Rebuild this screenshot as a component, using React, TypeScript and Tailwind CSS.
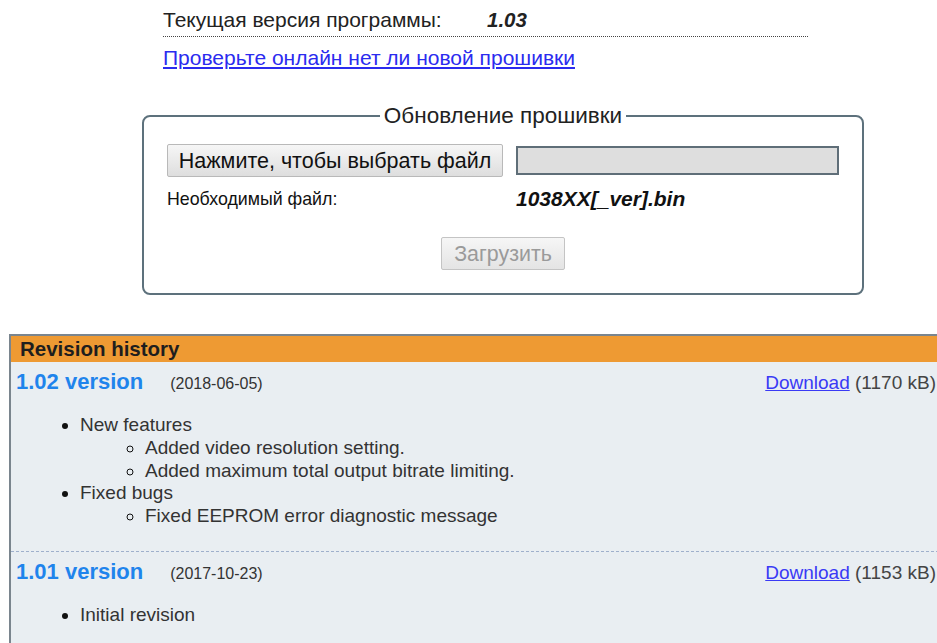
import React from "react";

type Revision = {
  version: string;
  date: string;
  size: string;
  items: { title: string; children?: string[] }[];
};

const revisions: Revision[] = [
  {
    version: "1.02 version",
    date: "(2018-06-05)",
    size: "(1170 kB)",
    items: [
      {
        title: "New features",
        children: ["Added video resolution setting.", "Added maximum total output bitrate limiting."],
      },
      { title: "Fixed bugs", children: ["Fixed EEPROM error diagnostic message"] },
    ],
  },
  {
    version: "1.01 version",
    date: "(2017-10-23)",
    size: "(1153 kB)",
    items: [{ title: "Initial revision" }],
  },
];

function RevisionEntry({ rev, first }: { rev: Revision; first: boolean }) {
  return (
    <div className={first ? "pb-[23px]" : "border-t border-dashed border-[#9fb0cc] pb-[23px]"}>
      <div className="flex items-center justify-between pl-[5px] pr-[13px] pt-[8px] leading-[24px]">
        <div className="flex items-baseline">
          <span className="text-[22px] font-bold text-[#1f84ec]">{rev.version}</span>
          <span className="ml-[27px] text-[16px] text-[#333]">{rev.date}</span>
        </div>
        <div className="whitespace-nowrap text-[19px] text-[#444]">
          <a href="#" className="text-[#3a3af5] underline">
            Download
          </a>{" "}
          {rev.size}
        </div>
      </div>
      <ul className="mt-[18px] ml-[69px] list-disc text-[19px] leading-[22.75px] text-[#333] marker:text-[#111]">
        {rev.items.map((item) => (
          <li key={item.title}>
            {item.title}
            {item.children && (
              <ul className="ml-[65px] list-[circle]">
                {item.children.map((c) => (
                  <li key={c}>{c}</li>
                ))}
              </ul>
            )}
          </li>
        ))}
      </ul>
    </div>
  );
}

export default function App() {
  return (
    <div className="min-h-[643px] w-[937px] overflow-hidden bg-white font-['Liberation_Sans',Arial,sans-serif] text-[#222]">
      {/* current version */}
      <div className="ml-[163px] w-[645px] pt-[8px]">
        <div className="flex items-center border-b border-dotted border-[#444] pb-[4px] text-[21px] leading-[24px]">
          <span className="w-[324px]">Текущая версия программы:</span>
          <span className="text-[20.5px] font-bold italic">1.03</span>
        </div>
        <a href="#" className="mt-[9px] inline-block text-[21px] leading-[24px] text-[#2b2bef] underline">
          Проверьте онлайн нет ли новой прошивки
        </a>
      </div>

      {/* firmware upload */}
      <fieldset className="ml-[142px] mt-[31px] h-[192px] w-[722px] rounded-[8px] border-2 border-[#5d717c] px-[23px]">
        <legend className="mx-auto px-[4px] text-[22.5px] leading-[26px] text-[#222]">Обновление прошивки</legend>
        <div className="mt-[15px] flex items-center">
          <button className="h-[33px] w-[336px] rounded-[2px] border border-[#b9b9b9] bg-gradient-to-b from-[#f6f6f6] to-[#dedede] text-[21.5px] leading-[24px] text-[#111]">
            Нажмите, чтобы выбрать файл
          </button>
          <div className="ml-[13px] h-[29px] w-[323px] border-2 border-[#5f6e78] bg-[#dedede]" />
        </div>
        <div className="mt-[10px] flex items-center leading-[24px]">
          <span className="w-[349px] text-[17.8px] text-[#111]">Необходимый файл:</span>
          <span className="text-[21px] font-bold italic text-[#111]">1038XX[_ver].bin</span>
        </div>
        <div className="mt-[26px] flex justify-center">
          <button
            disabled
            className="h-[33px] w-[124px] rounded-[2px] border border-[#c4c4c4] bg-gradient-to-b from-[#f6f6f6] to-[#e4e4e4] text-[21.4px] leading-[24px] text-[#9a9a9a]"
          >
            Загрузить
          </button>
        </div>
      </fieldset>

      {/* revision history */}
      <div className="ml-[9px] mt-[39px] w-[940px] border-l-2 border-t-2 border-[#7a858e] bg-[#e9eef2]">
        <div className="h-[26px] bg-[#ee9a33] pl-[9px] text-[20.5px] font-bold leading-[26px] text-[#1e1e1e]">
          Revision history
        </div>
        {revisions.map((rev, i) => (
          <RevisionEntry key={rev.version} rev={rev} first={i === 0} />
        ))}
      </div>
    </div>
  );
}
